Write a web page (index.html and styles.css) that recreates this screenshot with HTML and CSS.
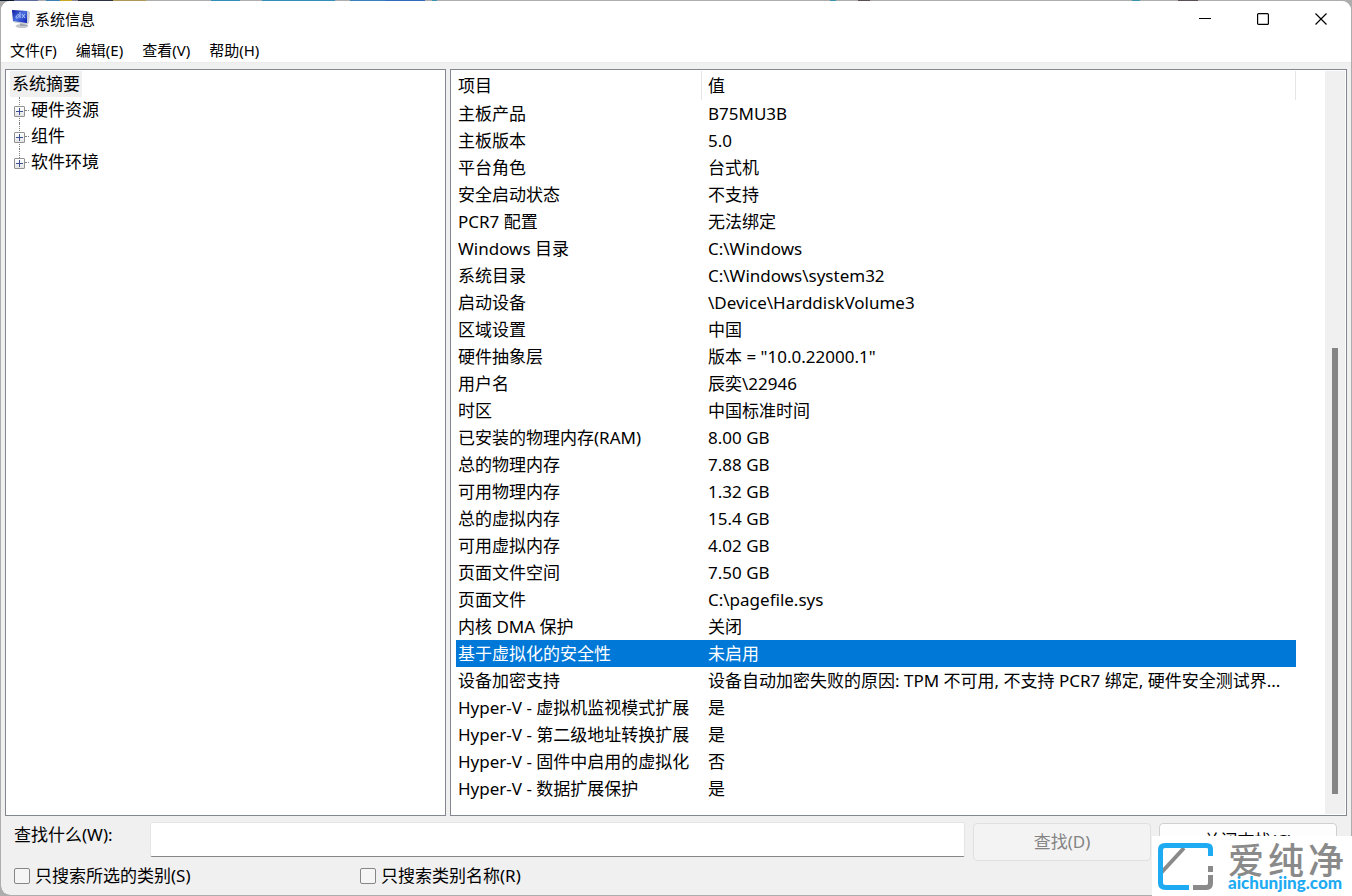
FILE: index.html
```html
<!DOCTYPE html>
<html lang="zh-CN">
<head>
<meta charset="utf-8">
<title>系统信息</title>
<link rel="stylesheet" href="styles.css">
</head>
<body>
<div class="window">
  <header class="titlebar">
    <svg class="app-icon" width="20" height="20" viewBox="0 0 20 20" aria-hidden="true">
      <defs>
        <linearGradient id="screen" x1="0" y1="0" x2="1" y2="1"><stop offset="0" stop-color="#0a18a0"/><stop offset=".5" stop-color="#4a6fe0"/><stop offset="1" stop-color="#0c1cb4"/></linearGradient>
      </defs>
      <ellipse cx="11" cy="17" rx="6.500" ry="2" fill="#c4c8ce"/>
      <path d="M9 13l6 1 1 3-7 0z" fill="#9ea4ae"/>
      <path d="M1 1l16 1 2 1-1 11-2 2L2 13z" fill="#c9ced6"/>
      <path d="M1 1l15 1v12L2 12z" fill="url(#screen)"/>
      <path d="M5 8c1-3 4-3 3-1s-3 3-3 1M9 3v6M11 5l3 4M14 5l-3 4" fill="none" stroke="#b4c9fa"/>
    </svg>
    <h1 class="title">系统信息</h1>
    <div class="controls">
      <button class="control" aria-label="最小化"><svg width="12" height="12"><path d="M0 5.500h12" stroke="#000"/></svg></button>
      <button class="control" aria-label="最大化"><svg width="12" height="12"><rect x=".6" y=".6" width="10.800" height="10.800" rx="1" fill="none" stroke="#000" stroke-width="1.200"/></svg></button>
      <button class="control" aria-label="关闭"><svg width="12" height="12"><path d="M.5.5l11 11M11.500.5l-11 11" stroke="#000" stroke-width="1.200"/></svg></button>
    </div>
  </header>
  <nav class="menubar">
    <button class="menu">文件(F)</button>
    <button class="menu">编辑(E)</button>
    <button class="menu">查看(V)</button>
    <button class="menu">帮助(H)</button>
  </nav>
  <main class="panes">
    <section class="pane tree">
      <button class="root">系统摘要</button>
      <ul class="nodes">
        <li class="node"><button class="expand" aria-label="展开"></button><span>硬件资源</span></li>
        <li class="node"><button class="expand" aria-label="展开"></button><span>组件</span></li>
        <li class="node"><button class="expand" aria-label="展开"></button><span>软件环境</span></li>
      </ul>
    </section>
    <section class="pane details">
      <table class="info">
        <colgroup><col class="col-name"><col></colgroup>
        <thead><tr><th>项目</th><th>值</th></tr></thead>
        <tbody>
          <tr><td>主板产品</td><td>B75MU3B</td></tr>
          <tr><td>主板版本</td><td>5.0</td></tr>
          <tr><td>平台角色</td><td>台式机</td></tr>
          <tr><td>安全启动状态</td><td>不支持</td></tr>
          <tr><td>PCR7 配置</td><td>无法绑定</td></tr>
          <tr><td>Windows 目录</td><td>C:\Windows</td></tr>
          <tr><td>系统目录</td><td>C:\Windows\system32</td></tr>
          <tr><td>启动设备</td><td>\Device\HarddiskVolume3</td></tr>
          <tr><td>区域设置</td><td>中国</td></tr>
          <tr><td>硬件抽象层</td><td>版本 = "10.0.22000.1"</td></tr>
          <tr><td>用户名</td><td>辰奕\22946</td></tr>
          <tr><td>时区</td><td>中国标准时间</td></tr>
          <tr><td>已安装的物理内存(RAM)</td><td>8.00 GB</td></tr>
          <tr><td>总的物理内存</td><td>7.88 GB</td></tr>
          <tr><td>可用物理内存</td><td>1.32 GB</td></tr>
          <tr><td>总的虚拟内存</td><td>15.4 GB</td></tr>
          <tr><td>可用虚拟内存</td><td>4.02 GB</td></tr>
          <tr><td>页面文件空间</td><td>7.50 GB</td></tr>
          <tr><td>页面文件</td><td>C:\pagefile.sys</td></tr>
          <tr><td>内核 DMA 保护</td><td>关闭</td></tr>
          <tr class="selected"><td>基于虚拟化的安全性</td><td>未启用</td></tr>
          <tr><td>设备加密支持</td><td>设备自动加密失败的原因: TPM 不可用, 不支持 PCR7 绑定, 硬件安全测试界...</td></tr>
          <tr><td>Hyper-V - 虚拟机监视模式扩展</td><td>是</td></tr>
          <tr><td>Hyper-V - 第二级地址转换扩展</td><td>是</td></tr>
          <tr><td>Hyper-V - 固件中启用的虚拟化</td><td>否</td></tr>
          <tr><td>Hyper-V - 数据扩展保护</td><td>是</td></tr>
        </tbody>
      </table>
      <div class="scrollbar"><div class="above"></div><div class="thumb"></div></div>
    </section>
  </main>
  <form class="search">
    <div class="query">
      <label class="query-label" for="find">查找什么(W):</label>
      <input class="query-input" id="find" type="text">
      <button class="btn" type="button" disabled>查找(D)</button>
      <button class="btn btn-close" type="button">关闭查找(C)</button>
    </div>
    <div class="options">
      <label class="option"><input class="check" type="checkbox">只搜索所选的类别(S)</label>
      <label class="option"><input class="check" type="checkbox">只搜索类别名称(R)</label>
    </div>
  </form>
</div>
<aside class="watermark">
  <svg width="58" height="50" viewBox="0 0 58 50" fill="none" stroke-width="5" aria-hidden="true">
    <path d="M27 6L4 31" stroke="#8a8a8a" stroke-width="4"/>
    <path d="M53.500 14V7q0-3.500-4-3.500H8Q3.500 3.500 3.500 8v33q0 4.500 5 4.500H32" stroke="#1eabf2"/>
    <path d="M53.500 24v6M53.500 33v8q0 4.500-4 4.500H36" stroke="#8a8a8a"/>
  </svg>
  <div class="brand">
    <div class="brand-name"><span>爱</span><span>纯</span><span>净</span></div>
    <div class="brand-site">aichunjing.com</div>
  </div>
</aside>
</body>
</html>
```
FILE: styles.css
```css
* { box-sizing: border-box; }
html {
  background:
    linear-gradient(90deg,
      #10182c 0 14px, #5f6c9c 14px 38px, #adadad 38px 46px, #3a82b4 46px 60px,
      #c8a820 60px 72px, #8a8a94 72px 78px, #2c3040 78px 113px, #b09858 113px 146px,
      #adadad 146px 211px, #3290b8 211px 240px, #adadad 240px 262px, #3290b8 262px 335px,
      #adadad 335px 350px, #3880c0 350px 385px, #2f6cc0 385px 425px, #adadad 425px 432px,
      #3a94b0 432px 437px, #adadad 437px 830px, #3a94b0 830px 836px, #adadad 836px 858px,
      #5a5058 858px 870px, #adadad 870px 1132px, #3a94b0 1132px 1140px, #adadad 1140px 1178px,
      #5a5058 1178px 1198px, #adadad 1198px) 0 0 / 100% 1px no-repeat,
    #adadad;
}
body {
  margin: 0;
  font: 17px/26px "Noto Sans", "Noto Sans CJK SC", sans-serif;
  color: #000;
}
button, input { font: inherit; color: inherit; }
button { border: 0; padding: 0; background: none; }

.window {
  display: flex;
  flex-direction: column;
  min-height: 100vh;
  border: 1px solid #adadad;
  border-top-color: transparent;
  border-radius: 10px;
  background: #f0f0f0;
  background-clip: padding-box;
  overflow: hidden;
}
.titlebar {
  display: flex;
  align-items: center;
  gap: 4px;
  height: 36px;
  padding: 0 1px 0 10px;
  background: #fff;
}
.title { margin: 0; font-size: 15px; font-weight: 400; }
.controls { display: flex; margin-left: auto; }
.control { display: grid; place-items: center; width: 58px; height: 36px; }
.menubar {
  display: flex;
  gap: 19px;
  height: 26px;
  padding: 0 9px;
  background: #fff;
  border-bottom: 1px solid #ebebeb;
  font-size: 15px;
}

.panes {
  display: grid;
  grid-template-columns: 441fr 897fr;
  gap: 4px;
  flex: 1;
  padding: 6px 4px;
}
.pane { border: 1px solid #828790; background: #fff; }
.tree { padding: 1px 4px; }
.root { display: block; height: 26px; padding: 0 2px; background: #f0f0f0; }
.nodes { margin: 0; padding: 0 0 0 4px; list-style: none; }
.node { display: flex; align-items: center; height: 26px; position: relative; }
.node::before {
  content: "";
  position: absolute;
  left: 5px;
  top: 0;
  height: 26px;
  border-left: 1px dotted #808080;
}
.node:last-child::before { height: 13px; }
.node::after {
  content: "";
  width: 4px;
  margin: 1px 2px 0 0;
  border-top: 1px dotted #808080;
  order: 1;
}
.node span { order: 2; }
.expand {
  position: relative;
  width: 11px;
  height: 11px;
  margin-top: 2px;
  border: 1px solid #919191;
  border-radius: 1px;
  background:
    linear-gradient(#3c4f90, #3c4f90) center / 7px 1px no-repeat,
    linear-gradient(#3c4f90, #3c4f90) center / 1px 7px no-repeat,
    linear-gradient(#fff, #e4e4e4);
}

.details { display: flex; padding: 1px 1px 1px 5px; }
.info {
  flex: 1;
  align-self: flex-start;
  margin-right: 29px;
  border-collapse: separate;
  border-spacing: 0;
  table-layout: fixed;
  width: 0;
}
.col-name { width: 246px; }
.info th {
  height: 29px;
  padding: 0 2px;
  border-right: 1px solid #e5e5e5;
  font-weight: 400;
  text-align: left;
}
.info td { height: 27px; padding: 0 2px; white-space: nowrap; overflow: hidden; }
.info th + th, .info td + td { padding-left: 6px; }
.selected { background: #0078d7; color: #fff; }
.scrollbar {
  display: flex;
  flex-direction: column;
  align-items: center;
  width: 20px;
  padding: 0 0 20px;
  background: #f0f0f0;
}
.above { flex: 277; }
.thumb { flex: 446; width: 6px; background: #858585; }

.search { padding: 0 14px 6px 13px; }
.query { display: flex; gap: 8px; height: 38px; }
.query-label { width: 128px; }
.query-input {
  flex: 1;
  min-width: 0;
  height: 35px;
  padding: 0 6px;
  border: 1px solid #e5e5e5;
  border-bottom-color: #868686;
  border-radius: 2px;
  background: #fff;
}
.btn {
  width: 178px;
  height: 38px;
  margin-top: 1px;
  border: 1px solid #d0d0d0;
  border-radius: 4px;
  background: #fdfdfd;
}
.btn-close { padding-bottom: 2px; }
.btn:disabled { border-color: #e0e0e0; background: #f3f3f3; color: #838383; }
.options { display: flex; padding-top: 3px; }
.option { display: flex; align-items: center; gap: 5px; width: 346px; }
.check {
  appearance: none;
  width: 16px;
  height: 16px;
  margin: 0;
  border: 1px solid #868686;
  border-radius: 2px;
  background: #f5f5f5;
}

.watermark {
  position: absolute;
  right: 0;
  bottom: 0;
  display: flex;
  gap: 13px;
  width: 200px;
  height: 60px;
  padding: 6px 5px;
  background: #fff;
}
.brand-name {
  display: flex;
  gap: 4px;
  font: 500 36px/32px "Noto Sans CJK SC", sans-serif;
  color: #8a8a8a;
}
.brand-site { font: 900 17px/18px Lato, sans-serif; color: #1eabf2; }
```
